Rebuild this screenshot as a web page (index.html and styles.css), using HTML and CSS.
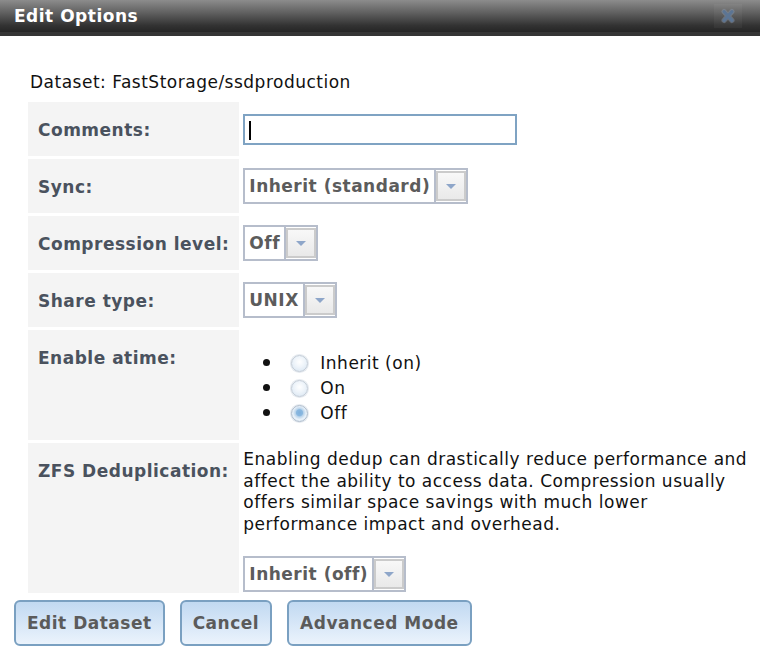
FILE: index.html
```html
<!DOCTYPE html>
<html>
<head>
<meta charset="utf-8">
<title>Edit Options</title>
<link rel="stylesheet" href="styles.css">
</head>
<body>
<div class="dialog">
  <div class="titlebar">
    <span class="title">Edit Options</span>
    <span class="close" title="Cancel">
      <svg width="16" height="16" viewBox="0 0 16 16">
        <path d="M4 3.5 L12 12.5 M12 3.5 L4 12.5" stroke="#8a9ab0" stroke-width="5" stroke-linecap="round" opacity="0.45"/>
        <path d="M4 3.5 L12 12.5 M12 3.5 L4 12.5" stroke="#5c7594" stroke-width="3" stroke-linecap="round"/>
      </svg>
    </span>
  </div>
  <div class="content">
    <div class="dataset">Dataset: FastStorage/ssdproduction</div>
    <table class="form">
      <tr class="row">
        <th class="label">Comments:</th>
        <td class="value value-input"><div class="textbox"><span class="caret"></span></div></td>
      </tr>
      <tr class="row">
        <th class="label">Sync:</th>
        <td class="value"><div class="select"><span class="sel-text">Inherit (standard)</span><span class="sel-btn"><span class="tri"></span></span></div></td>
      </tr>
      <tr class="row">
        <th class="label">Compression level:</th>
        <td class="value"><div class="select"><span class="sel-text">Off</span><span class="sel-btn"><span class="tri"></span></span></div></td>
      </tr>
      <tr class="row">
        <th class="label">Share type:</th>
        <td class="value"><div class="select"><span class="sel-text">UNIX</span><span class="sel-btn"><span class="tri"></span></span></div></td>
      </tr>
      <tr class="row row-atime">
        <th class="label">Enable atime:</th>
        <td class="value">
          <ul class="radios">
            <li><span class="radio"></span>Inherit (on)</li>
            <li><span class="radio"></span>On</li>
            <li><span class="radio radio-on"></span>Off</li>
          </ul>
        </td>
      </tr>
      <tr class="row row-dedup">
        <th class="label">ZFS Deduplication:</th>
        <td class="value value-dedup">
          <p class="help">Enabling dedup can drastically reduce performance and affect the ability to access data. Compression usually offers similar space savings with much lower performance impact and overhead.</p>
          <div class="select"><span class="sel-text">Inherit (off)</span><span class="sel-btn"><span class="tri"></span></span></div>
        </td>
      </tr>
    </table>
    <div class="actions">
      <button class="btn" type="button">Edit Dataset</button>
      <button class="btn" type="button">Cancel</button>
      <button class="btn" type="button">Advanced Mode</button>
    </div>
  </div>
</div>
</body>
</html>
```
FILE: styles.css
```css
html, body {
  margin: 0;
  padding: 0;
  background: #ffffff;
}

body {
  font-family: "DejaVu Sans", Verdana, sans-serif;
  font-size: 17px;
  letter-spacing: 0.5px;
  color: #111111;
}

.dialog {
  width: 760px;
  height: 662px;
  overflow: hidden;
}

.titlebar {
  height: 32px;
  border-bottom: 4px solid #353535;
  background: linear-gradient(to bottom, #8c8c8c 0%, #606060 40%, #323232 80%, #252525 100%);
  display: flex;
  justify-content: space-between;
  align-items: flex-start;
  padding: 0 18px 0 14px;
}

.title {
  color: #ffffff;
  font-weight: bold;
  font-size: 17px;
  line-height: 32px;
}

.close {
  margin-top: 4px;
  width: 28px;
  height: 24px;
  display: flex;
  align-items: center;
  justify-content: center;
  background: rgba(255, 255, 255, 0.04);
}

.dataset {
  margin: 36px 0 0 30px;
  line-height: 20px;
  color: #111111;
}

.form {
  margin: 7px 0 0 24px;
  border-collapse: separate;
  border-spacing: 4px 3px;
  width: 732px;
}

.label {
  box-sizing: border-box;
  width: 210px;
  background: #f4f4f4;
  color: #4a525e;
  font-weight: bold;
  text-align: left;
  vertical-align: top;
  padding: 18px 10px 0 10px;
  line-height: 20px;
  white-space: nowrap;
}

.value {
  vertical-align: top;
  padding: 9px 0;
  height: 36px;
}

.value-input {
  padding: 12px 0 11px 0;
  height: 31px;
}

.textbox {
  box-sizing: border-box;
  width: 274px;
  height: 31px;
  border: 2px solid #7fa3c3;
  background: #ffffff;
  padding: 5px 0 0 4px;
}

.caret {
  display: block;
  width: 2px;
  height: 19px;
  background: #000000;
}

.select {
  display: inline-flex;
  box-sizing: border-box;
  height: 36px;
  border: 2px solid #b6bdcb;
  background: #ffffff;
  vertical-align: top;
}

.sel-text {
  font-weight: bold;
  color: #5c5c5c;
  line-height: 32px;
  padding: 0 4px 0 4px;
  border-right: 2px solid #b6bdcb;
  white-space: nowrap;
}

.sel-btn {
  box-sizing: border-box;
  width: 30px;
  margin: 1px 0 1px 0;
  border: 2px solid #cbcbcb;
  background: linear-gradient(to bottom, #f8f8f8, #e9e9e9);
  display: flex;
  align-items: center;
  justify-content: center;
}

.tri {
  width: 0;
  height: 0;
  border-left: 5px solid transparent;
  border-right: 5px solid transparent;
  border-top: 5px solid #8ea6c9;
}

.row-atime .value {
  height: 92px;
  padding: 9px 0 9px 0;
}

.radios {
  margin: 10px 0 0 0;
  padding: 0 0 0 40px;
  list-style: disc;
}

.radios li {
  line-height: 25px;
  height: 25px;
}

.radios li::marker {
  font-size: 22px;
}

.radio {
  display: inline-block;
  box-sizing: border-box;
  width: 17px;
  height: 17px;
  margin: 0 12px 0 8px;
  vertical-align: -3px;
  border-radius: 50%;
  border: 1px solid #c3ccd6;
  background: radial-gradient(circle at 50% 40%, #ffffff 0%, #eef4fa 45%, #d5e3f0 100%);
  box-shadow: 0 0 0 1px rgba(210, 218, 228, 0.6);
}

.radio-on {
  border-color: #aebccb;
  background: radial-gradient(circle at 50% 45%, #7fb0dc 0%, #8ab8e0 28%, #b9d3ea 36%, #e9f1f9 60%, #d3e1ef 100%);
}

.value-dedup {
  padding: 6px 0 1px 0;
  height: auto;
}

.help {
  margin: 0 0 21px 0;
  line-height: 21.5px;
  color: #111111;
}

.actions {
  display: flex;
  gap: 15px;
  margin: 4px 0 0 14px;
}

.btn {
  height: 46px;
  padding: 0 11px;
  border: 2px solid #7aa0c1;
  border-radius: 6px;
  background: linear-gradient(to bottom, #c1d9f1 0%, #d6e6f7 50%, #ebf3fc 100%);
  font-family: "DejaVu Sans", Verdana, sans-serif;
  font-weight: bold;
  font-size: 17px;
  letter-spacing: 0.5px;
  color: #5b5b5b;
  cursor: pointer;
}
```
